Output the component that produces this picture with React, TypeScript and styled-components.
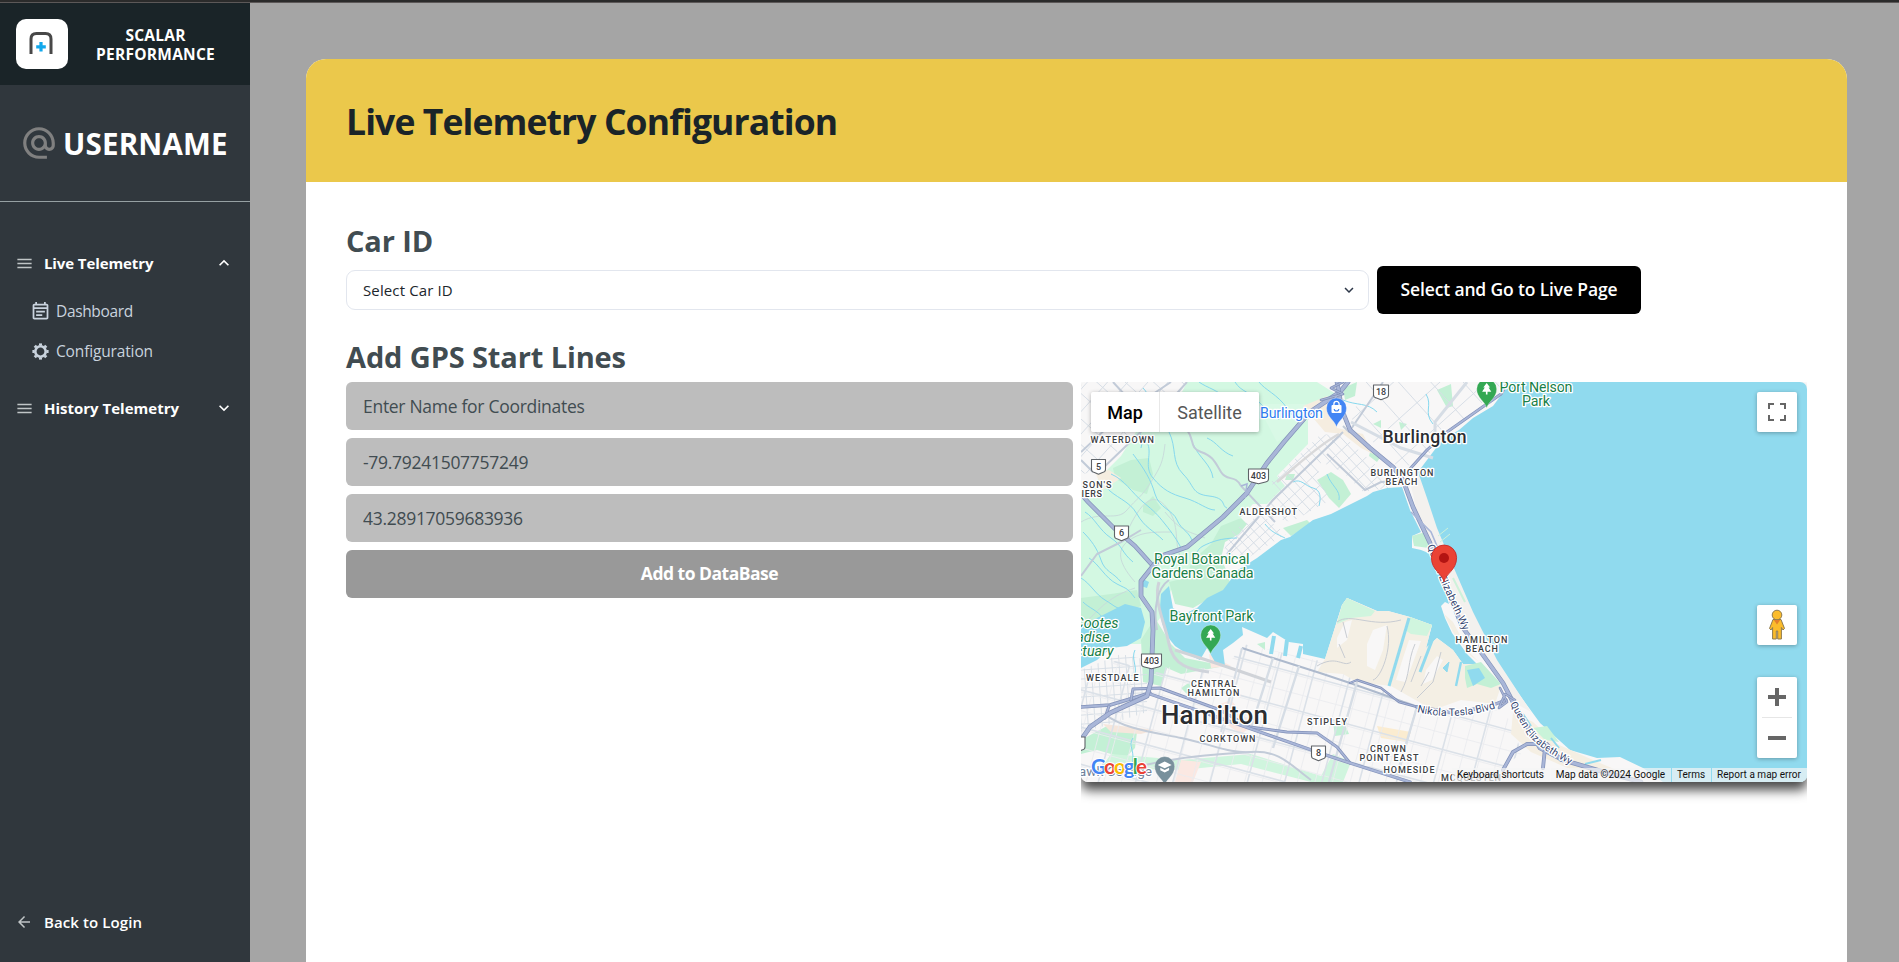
import React from 'react';
import styled, { createGlobalStyle } from 'styled-components';
import {
  MdAlternateEmail,
  MdArrowBack,
  MdExpandLess,
  MdExpandMore,
  MdMenu,
  MdOutlineEventNote,
} from 'react-icons/md';

const GlobalStyle = createGlobalStyle`
  *, *::before, *::after { box-sizing: border-box; }
  html, body { margin: 0; height: 100%; }
  body {
    font-family: "Segoe UI", "Open Sans", "Noto Sans", sans-serif;
    background: #a5a5a5;
    overflow: hidden;
  }
  button, input { font-family: inherit; }
`;

/* ---------- page frame ---------- */

const Page = styled.div`
  display: flex;
  flex-direction: column;
  height: 962px;
`;

const TopStrip = styled.div`
  flex: none;
  height: 3px;
  background: #2b2b2b;
  border-bottom: 1px solid #5c5858;
`;

const Shell = styled.div`
  flex: 1;
  min-height: 0;
  display: flex;
`;

/* ---------- sidebar ---------- */

const Sidebar = styled.aside`
  flex: none;
  width: 250px;
  display: flex;
  flex-direction: column;
  background: #30373d;
  color: #fff;
`;

const Brand = styled.div`
  height: 82px;
  padding: 0 35px 0 16px;
  display: flex;
  align-items: center;
  justify-content: space-between;
  background: #1a2428;
`;

const LogoBox = styled.div`
  width: 52px;
  height: 50px;
  border-radius: 10px;
  background: #fff;
  display: flex;
  align-items: center;
  justify-content: center;
  svg { margin: -2px 2px 0 0; }
`;

const BrandName = styled.div`
  padding-top: 2px;
  font-size: 15.5px;
  font-weight: 700;
  line-height: 19px;
  letter-spacing: 0.25px;
  text-align: center;
`;

const UserBlock = styled.div`
  height: 117px;
  padding-left: 20px;
  display: flex;
  align-items: center;
  gap: 5px;
  border-bottom: 1px solid #96a0a3;
  font-size: 29.5px;
  font-weight: 700;
  letter-spacing: 0.2px;
  svg { color: #808080; }
`;

const Menu = styled.nav`
  flex: 1;
  padding: 41px 16px 20px 15px;
  display: flex;
  flex-direction: column;
`;

const MenuRow = styled.div<{ $weight?: number; $spacing?: string }>`
  height: 40px;
  display: flex;
  align-items: center;
  font-size: 15px;
  font-weight: ${(p) => p.$weight ?? 700};
  letter-spacing: ${(p) => p.$spacing ?? '0'};
`;

const LeadIcon = styled.span`
  width: 29px;
  display: flex;
  color: #c0c5c7;
`;

const Chevron = styled.span`
  display: flex;
  margin-left: auto;
`;

const SubMenu = styled.div`
  padding: 8px 0 17px 15px;
`;

const SubRow = styled.div<{ $spacing: string }>`
  height: 40px;
  display: flex;
  align-items: center;
  gap: 5px;
  color: #c9d3de;
  font-size: 15.5px;
  letter-spacing: ${(p) => p.$spacing};
`;

const BackRow = styled(MenuRow)`
  margin-top: auto;
`;

/* ---------- main card ---------- */

const Main = styled.main`
  flex: 1;
  padding: 56px 52px 0 56px;
  background: #a5a5a5;
  display: flex;
`;

const Card = styled.section`
  flex: 1;
  display: flex;
  flex-direction: column;
  background: #fff;
  border-radius: 20px 20px 0 0;
  overflow: hidden;
`;

const CardHeader = styled.header`
  height: 123px;
  padding: 0 40px;
  display: flex;
  align-items: center;
  background: #ebc84b;
`;

const Title = styled.h1`
  margin: 0;
  color: #1a2428;
  font-size: 35.5px;
  font-weight: 700;
  letter-spacing: -0.9px;
`;

const CardBody = styled.div`
  padding: 39px 40px 0;
  display: flex;
  flex-direction: column;
`;

const SectionTitle = styled.h2<{ $gap: number }>`
  margin: 0 0 ${(p) => p.$gap}px;
  color: #414c51;
  font-size: 29px;
  font-weight: 700;
  line-height: 40px;
  letter-spacing: -0.12px;
`;

const CarRow = styled.div`
  display: flex;
  align-items: center;
  gap: 8px;
  margin-bottom: 23px;
`;

const Select = styled.div`
  width: 1023px;
  height: 40px;
  padding: 0 10px 1px 16px;
  display: flex;
  align-items: center;
  justify-content: space-between;
  border: 1px solid #e2e6ee;
  border-radius: 9px;
  color: #20262c;
  font-size: 15px;
  letter-spacing: 0.12px;
  svg { color: #2d3748; }
`;

const GoButton = styled.button`
  width: 264px;
  height: 48px;
  padding: 0 0 2px;
  border: 0;
  border-radius: 6px;
  background: #000;
  color: #fff;
  font-size: 17.5px;
  font-weight: 600;
  letter-spacing: -0.15px;
`;

const GpsGrid = styled.div`
  display: grid;
  grid-template-columns: 727px 726px;
  column-gap: 8px;
`;

const Form = styled.form`
  display: flex;
  flex-direction: column;
  gap: 8px;
`;

const Field = styled.input`
  height: 48px;
  padding: 0 17px;
  border: 0;
  border-radius: 6px;
  background: #bdbdbd;
  color: #414c51;
  font-size: 17.5px;
  letter-spacing: -0.29px;
  outline: 0;
  &::placeholder { color: #414c51; opacity: 1; }
`;

const AddButton = styled.button`
  height: 48px;
  padding: 0 0 2px;
  border: 0;
  border-radius: 6px;
  background: #999;
  color: #fff;
  font-size: 17.5px;
  font-weight: 700;
  letter-spacing: -0.5px;
`;

/* ---------- map ---------- */

const MapClip = styled.div`
  height: 426px;
  overflow: hidden;
`;

const MapFrame = styled.div`
  position: relative;
  width: 726px;
  height: 400px;
  border-radius: 7px;
  box-shadow: 0 8px 12px rgba(0, 0, 0, 0.72);
  font-family: Roboto, sans-serif;
`;

const MapSvg = styled.svg`
  display: block;
  border-radius: 7px;
`;

const MapTypes = styled.div`
  position: absolute;
  left: 10px;
  top: 10px;
  display: flex;
  gap: 1px;
  height: 40px;
  border-radius: 2px;
  overflow: hidden;
  background: #e8e8e8;
  box-shadow: 0 1px 4px rgba(0, 0, 0, 0.3);
`;

const MapType = styled.div<{ $active?: boolean }>`
  width: ${(p) => (p.$active ? 68 : 99)}px;
  display: flex;
  align-items: center;
  justify-content: center;
  background: #fff;
  color: ${(p) => (p.$active ? '#000' : '#565656')};
  font-size: 18px;
  font-weight: ${(p) => (p.$active ? 500 : 400)};
`;

const MapControl = styled.div<{ $top: number; $height: number }>`
  position: absolute;
  right: 10px;
  top: ${(p) => p.$top}px;
  width: 40px;
  height: ${(p) => p.$height}px;
  display: flex;
  flex-direction: column;
  align-items: center;
  justify-content: center;
  border-radius: 2px;
  background: #fff;
  box-shadow: 0 1px 4px rgba(0, 0, 0, 0.3);
`;

const ZoomHalf = styled.div`
  height: 40px;
  display: flex;
  align-items: center;
`;

const ZoomRule = styled.div`
  width: 30px;
  height: 1px;
  background: #e6e6e6;
`;

const Attribution = styled.div`
  position: absolute;
  right: 0;
  bottom: 0;
  display: flex;
  gap: 1px;
  height: 14px;
  border-bottom-right-radius: 7px;
  overflow: hidden;
  color: #111;
  font-size: 10px;
  line-height: 14px;
`;

const Credit = styled.span<{ $width: number }>`
  width: ${(p) => p.$width}px;
  padding-right: 1px;
  background: rgba(245, 245, 245, 0.7);
  letter-spacing: 0.02px;
  text-align: center;
  white-space: nowrap;
`;

/* ---------- map artwork ---------- */

type Pt = [number, number];

const INK = { road: '#d6dde5', mid: '#c2cbd8', hwy: '#a9b6d8', edge: '#8291b8', stream: '#86d8ee' };

function Road({ d, w = 3.4 }: { d: string; w?: number }) {
  return (
    <g fill="none" strokeLinejoin="round" strokeLinecap="round">
      <path d={d} stroke={INK.edge} strokeWidth={w + 1.4} />
      <path d={d} stroke={INK.hwy} strokeWidth={w} />
    </g>
  );
}

function Grid({ clip, angle, dx, dy, cx, cy, r, color = INK.road, w = 0.9 }: {
  clip: string; angle: number; dx: number; dy: number; cx: number; cy: number; r: number; color?: string; w?: number;
}) {
  const parts: string[] = [];
  for (let x = -r; x <= r; x += dx) parts.push(`M${x} ${-r}V${r}`);
  for (let y = -r; y <= r; y += dy) parts.push(`M${-r} ${y}H${r}`);
  return (
    <g clipPath={`url(#${clip})`}>
      <path transform={`translate(${cx} ${cy}) rotate(${angle})`} d={parts.join('')} fill="none" stroke={color} strokeWidth={w} />
    </g>
  );
}

function Shield({ x, y, label, w = 14 }: { x: number; y: number; label: string; w?: number }) {
  const h = w / 2;
  return (
    <g transform={`translate(${x} ${y})`}>
      <path
        d={`M${-h} -7H${h}V3Q${h} 5.5 ${h - 3} 6L0 7.8L${-h + 3} 6Q${-h} 5.5 ${-h} 3Z`}
        fill="#fff" stroke="#5f6368" strokeWidth="1.1" strokeLinejoin="round"
      />
      <text y="3.4" textAnchor="middle" fontSize="9" fontWeight="500" fill="#3c4043">{label}</text>
    </g>
  );
}

function Pin({ x, y, color, children }: { x: number; y: number; color: string; children?: React.ReactNode }) {
  return (
    <g transform={`translate(${x} ${y})`}>
      <path d="M0 19C-1.5 12.5-10 9-10 0A10 10 0 0 1 10 0C10 9 1.5 12.5 0 19Z" fill={color} stroke="#fff" strokeOpacity=".5" strokeWidth=".6" />
      {children}
    </g>
  );
}

const Tree = () => (
  <path d="M0-6L3.4-1.6H1.9L4.6 2.8H.8V5.4H-.8V2.8H-4.6L-1.9-1.6H-3.4Z" fill="#fff" />
);

type Label = { t: string; at: Pt; w: number };

const DISTRICTS: Label[] = [
  { t: 'WATERDOWN', at: [9.5, 61], w: 63.5 },
  { t: "SON'S", at: [1.5, 106], w: 29 },
  { t: 'IERS', at: [0.5, 115], w: 20.5 },
  { t: 'ALDERSHOT', at: [158.5, 133], w: 57.5 },
  { t: 'BURLINGTON', at: [289.5, 94], w: 63 },
  { t: 'BEACH', at: [304.5, 103], w: 32 },
  { t: 'WESTDALE', at: [5, 299], w: 52.5 },
  { t: 'CENTRAL', at: [110, 305], w: 45 },
  { t: 'HAMILTON', at: [106.5, 314], w: 52 },
  { t: 'CORKTOWN', at: [118.5, 360], w: 56 },
  { t: 'STIPLEY', at: [226, 343], w: 40 },
  { t: 'CROWN', at: [289, 370], w: 36 },
  { t: 'POINT EAST', at: [278.5, 379], w: 59 },
  { t: 'HOMESIDE', at: [302.5, 391], w: 51 },
  { t: 'HAMILTON', at: [374.5, 261], w: 52 },
  { t: 'BEACH', at: [384.5, 270], w: 32.5 },
  { t: 'MCQUESTEN', at: [360, 399], w: 60 },
];

const PARKS: Label[] = [
  { t: 'Royal Botanical', at: [73, 182], w: 95.5 },
  { t: 'Gardens Canada', at: [70.5, 196], w: 102 },
  { t: 'Bayfront Park', at: [88.5, 239], w: 84 },
  { t: 'Port Nelson', at: [418.5, 10], w: 73 },
  { t: 'Park', at: [441, 24], w: 28 },
];

const STREAMS = [
  'M66 60C72 72 62 84 72 96S90 112 104 116S126 128 134 128',
  'M88 50C96 66 90 80 102 92S110 112 128 114S140 124 146 126',
  'M52 72C64 88 70 98 74 112S92 128 96 138S110 150 112 162',
  'M30 92C44 98 50 110 62 120S76 132 84 142S96 158 100 166',
  'M24 104C34 116 48 118 56 132S72 148 82 158',
  'M4 130C14 136 18 148 30 156S40 170 52 180',
  'M2 150C10 158 16 166 20 178S32 190 40 200',
  'M8 176C18 182 24 196 36 202S46 206 54 216',
  'M0 196C10 202 14 212 24 218S34 226 44 228',
  'M2 220C8 226 16 228 22 236',
  'M62 6C70 14 66 20 76 26',
  'M154 0C160 10 170 10 178 20S192 26 198 38',
  'M178 0C184 8 196 12 206 26S214 34 220 40',
  'M118 0C126 6 138 8 146 18',
  'M126 56C136 60 140 70 152 74',
  'M112 62C118 76 130 82 132 96',
  'M60 40C54 50 64 54 60 66',
  'M212 100C220 96 224 104 232 106S240 116 238 124',
  'M246 92C250 104 260 108 258 118',
  'M184 142C190 150 196 152 204 156',
  'M345 12C352 24 342 30 352 42',
  'M262 18C276 24 286 20 296 30',
  'M54 268C50 276 56 284 54 292',
  'M52 356C46 364 56 370 50 384',
  'M110 180C116 176 114 168 122 164S140 156 156 156',
];

function MapArt() {
  return (
    <MapSvg width="726" height="400" viewBox="0 0 726 400" fontFamily="Roboto, sans-serif">
      <defs>
        <clipPath id="city"><path d="M80 285L144 287L162 262L244 280L300 306L345 328L412 326L432 340L440 372L400 400H0V300L40 275L66 300Z" /></clipPath>
        <clipPath id="west"><path d="M0 288L40 272L66 278V330L20 345L0 350Z" /></clipPath>
        <clipPath id="shore"><path d="M240 52L262 54L300 88L318 104L282 110L262 90L240 80L236 96L250 118L210 140L180 132L196 110L190 100Z" /></clipPath>
        <clipPath id="bay"><path d="M150 150L180 132L205 152L160 180L140 176Z" /></clipPath>
        <clipPath id="burl"><path d="M285 0H425L368 50L340 80L318 86L282 50L270 36Z" /></clipPath>
        <clipPath id="nw"><path d="M0 0H105L80 26L40 66L14 90L0 92Z" /></clipPath>
      </defs>

      {/* land and vegetation */}
      <rect width="726" height="400" fill="#f8f7f7" />
      <path d="M0 118L18 96L40 74L60 42L84 30L100 12L106 0H236L258 14L227 38V62L196 94L204 104L186 122L172 122L150 146L134 160L140 180L110 188L92 202L82 232L60 262L0 262Z" fill="#d3f8e2" />
      <path d="M112 12L150 22L226 22L227 38L196 60L180 30L130 24Z" fill="#d9f9e6" />
      <path d="M32 86L50 78L68 76L72 92L66 112L52 108L34 96Z" fill="#c3f0d5" />
      <path d="M62 124L72 114L80 126L72 134L62 130Z" fill="#c3f0d5" />
      <path d="M0 216L30 212L56 208L60 224L40 232L12 240L0 246Z" fill="#c3f0d5" />
      <path d="M112 178L130 162L140 144L160 136L166 142L158 152L144 160L140 176L146 190L150 204L112 226L94 222L88 200L104 196Z" fill="#c3f0d5" />
      <path d="M236 98L250 90L262 98L270 112L258 126L248 116Z" fill="#c3f0d5" />
      <path d="M202 146L226 138L230 142L210 154Z" fill="#c3f0d5" />
      <path d="M206 92L214 92L212 98L204 98ZM276 0L274 14L264 18L262 6ZM356 8L370 2L372 24L366 26ZM292 42L300 38L300 46ZM318 40L326 42L320 48ZM290 66L300 74L296 80L288 74Z" fill="#c3f0d5" />
      <path d="M0 358L26 344L56 350L54 366L44 376L16 368L0 372Z" fill="#c3f0d5" />
      <path d="M30 372L100 378L170 372L240 394L252 372L270 380L262 400H230L160 382L100 388L20 386Z" fill="#d0f5de" />
      <path d="M60 258L74 236L90 262L104 276L144 284L100 292L86 286L80 304L62 300Z" fill="#c3f0d5" />
      <path d="M252 340L262 338L268 352L254 354ZM176 262L184 260L184 268ZM112 298L106 312L100 306Z" fill="#c3f0d5" />
      <path d="M222 24L246 14L256 30L256 46L282 52L292 72L280 66L262 52L244 50Z" fill="#f5ede0" />
      <path d="M14 90L28 88L40 96L22 108Z" fill="#f5ede0" />
      <path d="M134 324L150 318L172 344L160 352L142 340ZM100 378L120 380L112 400H94ZM128 272L150 284L130 286Z" fill="#fbe8e2" />
      <path d="M296 344L330 350L326 360L300 356Z" fill="#fbecd0" />
      <path d="M22 342L74 348L60 352L30 350Z" fill="#f5e6dc" />

      {/* streets */}
      <Grid clip="nw" angle={42} dx={15} dy={19} cx={40} cy={30} r={120} />
      <Grid clip="burl" angle={-42} dx={24} dy={31} cx={340} cy={40} r={110} />
      <Grid clip="shore" angle={-43} dx={8} dy={11} cx={240} cy={90} r={90} />
      <Grid clip="bay" angle={-43} dx={8} dy={8} cx={170} cy={155} r={50} />
      <Grid clip="west" angle={-4} dx={7} dy={9} cx={30} cy={310} r={60} />
      <Grid clip="city" angle={15} dx={17} dy={18} cx={220} cy={340} r={260} color="#eaecef" w={0.8} />
      <Grid clip="city" angle={15} dx={36} dy={36} cx={228} cy={340} r={260} color="#dbe1e8" w={1.6} />

      {/* streams and minor trails */}
      <g fill="none" stroke="#c9dcdb" strokeWidth="1">
        <path d="M0 140C20 128 36 140 46 128S60 116 70 100S82 80 84 62" />
        <path d="M46 150C60 120 72 108 86 126S92 160 100 176" />
        <path d="M54 200C40 184 34 170 46 160S70 150 90 150" />
        <path d="M84 130C100 150 110 150 124 156" />
        <path d="M0 246C20 224 30 214 54 206" />
      </g>
      <g fill="none" stroke={INK.stream} strokeWidth="1">
        {STREAMS.map((d) => <path key={d} d={d} />)}
      </g>

      {/* lake */}
      <path d="M430 0H726V400H582L562 386L539 375L516 376L489 368L459 341L438 312L416 281L394 238L372 196L359 155L349 141L342 115L337 90L349 74L361 58L378 48L392 36L412 24Z" fill="#90daee" />
      {/* harbour */}
      <path d="M321 105L306 106L292 110L286 114L262 126L250 132L232 138L209 155L200 158L176 176L157 188L142 208L126 216L116 226L103 232L92 226L88 204L80 212L79 226L81 241L86 254L94 264L106 272L119 278L126 266L134 280L144 284L142 268L152 261L162 253L161 245L186 256L192 250L208 260L222 262L222 272L244 277L261 223L266 216L296 229L307 229L329 235L351 243L345 266L356 256L372 268L382 282L396 282L386 272L371 251L364 236L360 224L364 220L368 222L362 200L350 172L340 168L331 166L331 154L340 150L329 128Z" fill="#90daee" />
      {/* Cootes Paradise */}
      <path d="M0 246L12 238L28 230L44 222L60 226L64 240L60 256L46 264L30 266L16 278L0 286Z" fill="#90daee" />
      <path d="M60 196L68 200L66 206L60 204Z" fill="#90daee" />

      {/* port lands */}
      <path d="M244 277L261 223L266 216L296 229L307 229L329 235L351 243L345 266L356 256L372 268L382 282L396 282L404 296L420 304L414 322L380 318L352 328L310 304L276 300L262 292L236 290Z" fill="#f4efe4" />
      <path d="M261 223L266 216L294 229L290 234L270 236L256 242ZM329 235L351 243L346 254L330 252L324 248Z" fill="#d0f5de" />
      <path d="M264 240L271 238L266 258L256 266L256 256ZM292 248L306 243L302 268L294 288L286 284L286 262ZM328 258L340 259L330 286L324 300L315 298L322 276ZM356 274L362 278L351 298L342 302L345 288Z" fill="#f8f7f7" />
      <path d="M384 284L400 280L420 302L410 306L396 302L386 306L384 296Z" fill="#c3f0d5" />
      <path d="M386 288L398 286L404 296L392 304Z" fill="#90daee" />
      <g stroke="#90daee" fill="none" strokeWidth="3">
        <path d="M328 236L308 304" /><path d="M352 256L339 290" /><path d="M380 280L375 304" strokeWidth="2.4" />
        <path d="M193 254L190 272M206 258L204 274M220 264L217 276" strokeWidth="4" />
        <path d="M362 286L368 280L366 290Z" fill="#90daee" strokeWidth="1" />
      </g>
      <g stroke="#c8ccd2" strokeWidth="1" fill="none">
        <path d="M256 240C270 230 290 246 320 238" /><path d="M306 244C312 266 300 296 292 298" />
        <path d="M334 262C326 280 330 292 320 310" /><path d="M360 270L352 300L336 316" />
        <path d="M236 284C256 272 262 286 270 280" />
        <path d="M262 240L266 256M258 262L264 276M340 274L330 300M348 290L340 304" />
      </g>
      {/* bar between harbour and lake */}
      <path d="M337 90L346 116L356 146L372 184L392 230L416 278L450 330L436 322L412 290L386 256L362 196L348 162L336 130L330 104Z" fill="#f3f1ee" />
      <path d="M363 232L372 250L390 274L398 280L388 270L372 240Z" fill="#f4efe4" />
      <path d="M331 154L344 150L348 166L333 164Z" fill="#c3f0d5" />
      <path d="M357 154L367 146M359 160L369 152" stroke="#cdf2da" strokeWidth="1" />
      <path d="M372 196L384 220" stroke="#cdf2da" strokeWidth="2" />
      <path d="M432 330L452 340L476 362L512 378L540 390L500 392L450 370L430 352Z" fill="#f5efe3" />
      <path d="M452 346L466 344L478 360L464 358Z" fill="#c9f3d9" />
      <path d="M442 332L450 344M470 356L478 366M504 382L520 378" stroke="#90daee" strokeWidth="2" />

      {/* secondary roads */}
      <g fill="none" stroke={INK.mid} strokeWidth="2">
        <path d="M106 48C114 58 108 66 120 70S134 80 140 90S154 92 160 104L194 140" />
        <path d="M262 50L192 118L146 172" />
        <path d="M246 72L284 108L300 100L326 98" />
        <path d="M0 70L30 42L66 16L90 0" /><path d="M20 88L70 40L106 0" /><path d="M0 78L12 90" />
        <path d="M32 0L56 26" /><path d="M0 194L16 172L40 160L60 148" />
        <path d="M78 200C72 220 84 240 88 262S110 288 128 290" strokeWidth="3" stroke="#cfd3da" />
        <path d="M88 198C76 206 72 228 76 248" />
        <path d="M94 268C120 276 150 286 190 300" stroke="#d0d3d8" strokeWidth="3" />
        <path d="M161 266L192 276L239 291L269 301L309 315L336 325" stroke="#aebacd" />
        <path d="M161 266L140 350" stroke={INK.road} /><path d="M192 276L170 346M218 284L192 366M276 300L248 400M336 325L316 392" stroke={INK.road} strokeWidth="2.4" />
        <path d="M24 332C40 346 70 350 100 356S150 372 170 370" />
        <path d="M60 384C100 374 140 372 170 370S210 384 230 398" />
        <path d="M302 0L268 50L262 44" /><path d="M270 40L320 66L352 76" stroke={INK.road} strokeWidth="3" />
        <path d="M386 0L354 40V52" stroke={INK.road} strokeWidth="3" />
      </g>
      <path d="M196 100C216 84 236 64 258 52" stroke="#d9d9da" strokeWidth="2.5" fill="none" />

      {/* highways */}
      <Road d="M0 112L7 120L33 146L54 164L72 184" w={3} />
      <Road d="M426 2L420 12L366 50L346 68L328 88" w={1.6} />
      <Road d="M0 325L29 323L69 311" w={2} />
      <Road d="M50 318L52 307L79 306L139 328L169 345L206 350L236 351L256 365L269 381" w={1.6} />
      <Road d="M69 312L159 343L239 371L269 381L329 400" w={2} />
      <Road d="M28 324L24 336" w={1.6} />
      <Road d="M269 301L276 298L300 306L318 320L340 326" w={1} />
      <Road d="M336 325L375 331L412 323L425 318" w={2} />
      <Road d="M267 0L259 10L229 30L203 60L186 81L166 111L142 135L106 165L83 173L72 184L60 199L60 214L71 230L72 248L70 300L66 314L29 331L9 345L0 358" w={3.4} />
      <Road d="M256 0L261 28L269 48L289 66L312 85L322 98L332 125L349 161L366 208L382 246L402 273L422 301L432 320L459 366L482 378L516 388L560 400" w={3.2} />
      <Road d="M240 18L262 12L250 6L262 0M248 22L256 14" w={1.2} />
      <Road d="M422 388L432 370L446 362L466 362L480 378M464 366L462 386" w={2.4} />
      <Road d="M419 306L426 320L418 326L424 312L434 318" w={1.2} />
      <path d="M160 104L166 102L164 116M330 130L350 150L356 164" stroke={INK.hwy} strokeWidth="1.6" fill="none" />

      {/* labels */}
      <g paintOrder="stroke" stroke="#fff" strokeWidth="2.6" strokeLinejoin="round">
        <g fontSize="9" fontWeight="500" fill="#3c4043">
          {DISTRICTS.map(({ t, at, w }) => (
            <text key={t + at[0]} x={at[0]} y={at[1]} textLength={w}>{t}</text>
          ))}
        </g>
        <g fontSize="14.3" fill="#188048">
          {PARKS.map(({ t, at, w }) => (
            <text key={t} x={at[0]} y={at[1]} textLength={w}>{t}</text>
          ))}
          <g fontStyle="italic" textAnchor="end">
            <text x="37.5" y="246">Cootes</text>
            <text x="28.5" y="260">Paradise</text>
            <text x="32.5" y="274">Sanctuary</text>
          </g>
        </g>
        <text x="179" y="36" textLength="63" fontSize="14.3" fill="#2f7df0">Burlington</text>
        <text x="301.5" y="61" textLength="84" fontSize="17.6" fontWeight="500" fill="#2a2d31">Burlington</text>
        <text x="80" y="342" textLength="107" fontSize="26" fontWeight="500" fill="#2a2d31">Hamilton</text>
        <text x="71" y="394" textAnchor="end" fontSize="13.6" fill="#71829a">Mohawk College</text>
        <g fontSize="10.5" fill="#33456f">
          <path id="qew1" d="M346 164L360 200L382 248" fill="none" stroke="none" />
          <path id="qew2" d="M429 322L446 352Q462 370 494 385" fill="none" stroke="none" />
          <path id="tesla" d="M336 330Q376 340 418 325" fill="none" stroke="none" />
          <text><textPath href="#qew1">Queen Elizabeth Wy</textPath></text>
          <text fontSize="10"><textPath href="#qew2">Queen Elizabeth Wy</textPath></text>
          <text><textPath href="#tesla">Nikola Tesla Blvd</textPath></text>
        </g>
      </g>

      <Shield x={17.5} y={84.5} label="5" />
      <Shield x={40.5} y={151} label="6" />
      <Shield x={177.5} y={94} label="403" w={20} />
      <Shield x={70.5} y={279} label="403" w={20} />
      <Shield x={300} y={10} label="18" w={15} />
      <Shield x={237.5} y={371} label="8" />
      <Shield x={-3} y={362} label="8" />

      <Pin x={255.5} y={26} color="#4285f4">
        <rect x="-5" y="-3" width="10" height="8" rx="1" fill="#fff" />
        <path d="M-2.6-2.6V-4A2.6 2.6 0 0 1 2.6-4V-2.6" fill="none" stroke="#fff" strokeWidth="1.3" />
        <path d="M-2.3 1A2.3 2 0 0 0 2.3 1" fill="none" stroke="#4285f4" strokeWidth="1.1" />
      </Pin>
      <Pin x={129.7} y={253} color="#34a853"><Tree /></Pin>
      <Pin x={405.7} y={7} color="#34a853"><Tree /></Pin>
      <Pin x={83.7} y={384.5} color="#78909c">
        <path d="M0-5L7-1.6L0 1.8L-7-1.6ZM-4.4 1.2L0 3.4L4.4 1.2V3.8L0 6L-4.4 3.8Z" fill="#fff" />
      </Pin>

      <g transform="translate(363 176)">
        <path d="M0 24C-1.4 15.5-12.6 12.5-12.6-.4A12.6 12.6 0 0 1 12.6-.4C12.6 12.5 1.4 15.5 0 24Z" fill="#ea4335" stroke="#c5221f" strokeWidth=".8" />
        <circle r="5" fill="#b31412" />
      </g>

      <text x="10" y="392" fontFamily="Lato, sans-serif" fontSize="20.5" fontWeight="700" textLength="56" paintOrder="stroke" stroke="#fff" strokeWidth="2">
        <tspan fill="#4285f4">G</tspan><tspan fill="#ea4335">o</tspan><tspan fill="#fbbc04">o</tspan>
        <tspan fill="#4285f4">g</tspan><tspan fill="#34a853">l</tspan><tspan fill="#ea4335">e</tspan>
      </text>
    </MapSvg>
  );
}

/* ---------- icons ---------- */

const BrandMark = () => (
  <svg width="24" height="24" viewBox="0 0 24 24" fill="none">
    <path d="M2 23V8Q2 2.5 7.5 2.5H16.5Q22 2.5 22 8V23" stroke="#484848" strokeWidth="3" />
    <path d="M12 11V20.5M7.2 15.8H16.8" stroke="#12a8ec" strokeWidth="3.2" />
  </svg>
);

const Gear = () => (
  <svg width="21" height="21" viewBox="-10.5 -10.5 21 21" fill="none" stroke="currentColor">
    <circle r="5.2" strokeWidth="2.6" />
    {[0, 45, 90, 135, 180, 225, 270, 315].map((a) => (
      <path key={a} d="M0-6V-8.1" strokeWidth="3" transform={`rotate(${a})`} />
    ))}
  </svg>
);

const FullscreenIcon = () => (
  <svg width="18" height="18" viewBox="0 0 18 18" fill="none" stroke="#666" strokeWidth="2">
    <path d="M1 6V1H6M12 1H17V6M17 12V17H12M6 17H1V12" />
  </svg>
);

const Pegman = () => (
  <svg width="18" height="32" viewBox="0 0 18 32">
    <path d="M5 10.5H13L16.5 19.5L15 21L13.4 18.5V30H9.7V22H8.3V30H4.6V18.5L3 21L1.5 19.5Z" fill="#fbbc2c" stroke="#8d7a50" strokeWidth="1" strokeLinejoin="round" />
    <circle cx="9" cy="6" r="4.8" fill="#fbbc2c" stroke="#8d7a50" strokeWidth="1" />
    <path d="M5.8 11H12.2L9 15.5Z" fill="#e37f2c" />
  </svg>
);

const Plus = () => (
  <svg width="18" height="18" viewBox="0 0 18 18"><path d="M7 0H11V7H18V11H11V18H7V11H0V7H7Z" fill="#666" /></svg>
);

const Minus = () => (
  <svg width="18" height="18" viewBox="0 0 18 18"><path d="M0 7H18V11H0Z" fill="#666" /></svg>
);

/* ---------- app ---------- */

export default function App() {
  return (
    <Page>
      <GlobalStyle />
      <TopStrip />
      <Shell>
        <Sidebar>
          <Brand>
            <LogoBox><BrandMark /></LogoBox>
            <BrandName>SCALAR<br />PERFORMANCE</BrandName>
          </Brand>
          <UserBlock><MdAlternateEmail size={38} />USERNAME</UserBlock>
          <Menu>
            <MenuRow $spacing="-0.1px">
              <LeadIcon><MdMenu size={19} /></LeadIcon>Live Telemetry
              <Chevron><MdExpandLess size={20} /></Chevron>
            </MenuRow>
            <SubMenu>
              <SubRow $spacing="-0.35px"><MdOutlineEventNote size={21} />Dashboard</SubRow>
              <SubRow $spacing="-0.15px"><Gear />Configuration</SubRow>
            </SubMenu>
            <MenuRow>
              <LeadIcon><MdMenu size={19} /></LeadIcon>History Telemetry
              <Chevron><MdExpandMore size={20} /></Chevron>
            </MenuRow>
            <BackRow $weight={600} $spacing="0.1px">
              <LeadIcon><MdArrowBack size={18} /></LeadIcon>Back to Login
            </BackRow>
          </Menu>
        </Sidebar>

        <Main>
          <Card>
            <CardHeader><Title>Live Telemetry Configuration</Title></CardHeader>
            <CardBody>
              <SectionTitle $gap={5}>Car ID</SectionTitle>
              <CarRow>
                <Select>Select Car ID<MdExpandMore size={18} /></Select>
                <GoButton>Select and Go to Live Page</GoButton>
              </CarRow>
              <SectionTitle $gap={5}>Add GPS Start Lines</SectionTitle>
              <GpsGrid>
                <Form>
                  <Field placeholder="Enter Name for Coordinates" />
                  <Field defaultValue="-79.79241507757249" />
                  <Field defaultValue="43.28917059683936" />
                  <AddButton type="button">Add to DataBase</AddButton>
                </Form>
                <MapClip>
                  <MapFrame>
                    <MapArt />
                    <MapTypes>
                      <MapType $active>Map</MapType>
                      <MapType>Satellite</MapType>
                    </MapTypes>
                    <MapControl $top={10} $height={40}><FullscreenIcon /></MapControl>
                    <MapControl $top={223} $height={40}><Pegman /></MapControl>
                    <MapControl $top={295} $height={81}>
                      <ZoomHalf><Plus /></ZoomHalf>
                      <ZoomRule />
                      <ZoomHalf><Minus /></ZoomHalf>
                    </MapControl>
                    <Attribution>
                      <Credit $width={98}>Keyboard shortcuts</Credit>
                      <Credit $width={120}>Map data ©2024 Google</Credit>
                      <Credit $width={39}>Terms</Credit>
                      <Credit $width={95}>Report a map error</Credit>
                    </Attribution>
                  </MapFrame>
                </MapClip>
              </GpsGrid>
            </CardBody>
          </Card>
        </Main>
      </Shell>
    </Page>
  );
}
